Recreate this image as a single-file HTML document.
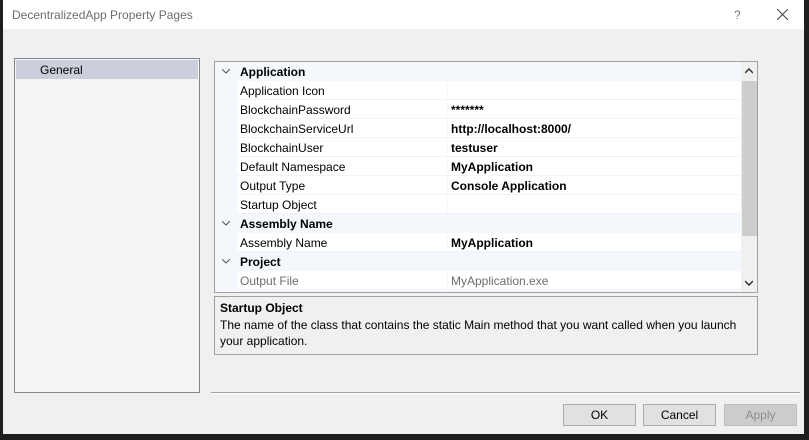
<!DOCTYPE html><html><head><style>
body{margin:0;width:809px;height:440px;background:#1e1e1e;position:relative;overflow:hidden;font-family:"Liberation Sans",sans-serif;font-size:12px;}
.win{position:absolute;left:3px;top:0;width:801px;height:434px;background:#f0f0f0;}
.title{position:absolute;left:0;top:0;width:801px;height:29px;background:#fff;}
.title span{position:absolute;left:9px;top:8px;color:#6d6d6d;font-size:12px}
.abs{position:absolute}
.list{left:11px;top:58px;width:184px;height:333px;border:1px solid #82858c;background:#f5f5f5}
.sel{left:1px;top:1px;width:182px;height:19px;background:#cccedb}
.grid{left:211px;top:61px;width:542px;height:230px;border:1px solid #a0a0a0;background:#f4f7fc;overflow:hidden}
.row{position:absolute;left:0;height:19px;width:525px}
.row .n{position:absolute;left:22px;top:0;height:18px;background:#fff;border-bottom:1px solid #f0f3f9;line-height:20px;padding-left:3px;box-sizing:border-box;width:210px;height:19px}
.row .v{position:absolute;left:233px;top:0;width:292px;height:18px;background:#fff;border-bottom:1px solid #f0f3f9;line-height:20px;padding-left:3px;font-weight:bold}
.cat{font-weight:bold;line-height:20px}
.cat .t{position:absolute;left:25px}
.cat svg{position:absolute;left:7px;top:7px}
.sb{left:526px;top:0;width:16px;height:230px;background:#f0f0f0}
.desc{left:211px;top:296px;width:542px;height:57px;border:1px solid #a0a0a0;background:#f0f0f0}
.btn{position:absolute;top:404px;width:71px;height:20px;border:1px solid #adadad;background:#e1e1e1;text-align:center;line-height:21px}
</style></head><body>
<div class="win">
<div class="title"><span>DecentralizedApp Property Pages</span>
<span style="left:731px;color:#777">?</span>
<svg class="abs" style="left:774px;top:9px" width="11" height="11"><path d="M0 0L11 11M11 0L0 11" stroke="#444" stroke-width="1"/></svg></div>
<div class="abs list"><div class="abs sel"></div><div class="abs" style="left:25px;top:4px">General</div></div>
<div class="abs grid">
<div class="row cat" style="top:0"><svg width="8" height="5"><path d="M0 0L4 4L8 0" stroke="#555" fill="none"/></svg><span class="t">Application</span></div>
<div class="row" style="top:19px"><div class="n">Application Icon</div><div class="v"></div></div>
<div class="row" style="top:38px"><div class="n">BlockchainPassword</div><div class="v">*******</div></div>
<div class="row" style="top:57px"><div class="n">BlockchainServiceUrl</div><div class="v">http://localhost:8000/</div></div>
<div class="row" style="top:76px"><div class="n">BlockchainUser</div><div class="v">testuser</div></div>
<div class="row" style="top:95px"><div class="n">Default Namespace</div><div class="v">MyApplication</div></div>
<div class="row" style="top:114px"><div class="n">Output Type</div><div class="v">Console Application</div></div>
<div class="row" style="top:133px"><div class="n">Startup Object</div><div class="v"></div></div>
<div class="row cat" style="top:152px"><svg width="8" height="5"><path d="M0 0L4 4L8 0" stroke="#555" fill="none"/></svg><span class="t">Assembly Name</span></div>
<div class="row" style="top:171px"><div class="n">Assembly Name</div><div class="v">MyApplication</div></div>
<div class="row cat" style="top:190px"><svg width="8" height="5"><path d="M0 0L4 4L8 0" stroke="#555" fill="none"/></svg><span class="t">Project</span></div>
<div class="row" style="top:209px"><div class="n" style="color:#6d6d6d">Output File</div><div class="v" style="font-weight:normal;color:#6d6d6d">MyApplication.exe</div></div>
<div class="abs sb"><svg class="abs" style="left:4px;top:6px" width="8" height="6"><path d="M0 5L4 1L8 5" stroke="#333" stroke-width="1.5" fill="none"/></svg>
<div class="abs" style="left:1px;top:19px;width:15px;height:155px;background:#cdcdcd"></div>
<svg class="abs" style="left:4px;top:218px" width="8" height="6"><path d="M0 1L4 5L8 1" stroke="#333" stroke-width="1.5" fill="none"/></svg></div>
</div>
<div class="abs desc"><div class="abs" style="left:5px;top:4px;font-weight:bold">Startup Object</div>
<div class="abs" style="left:5px;top:20px;width:530px;line-height:16px">The name of the class that contains the static Main method that you want called when you launch your application.</div></div>
<div class="abs" style="left:208px;top:392px;width:589px;height:1px;background:#a0a0a0;border-bottom:1px solid #fff"></div>
<div class="btn" style="left:560px">OK</div>
<div class="btn" style="left:640px">Cancel</div>
<div class="btn" style="left:721px;color:#8d8d8d;background:#ccc;border-color:#bfbfbf">Apply</div>
</div>
</body></html>
